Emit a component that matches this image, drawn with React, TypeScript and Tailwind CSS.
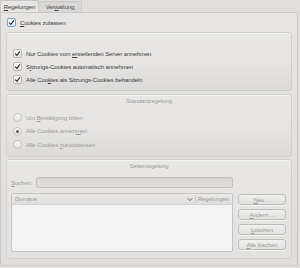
import React from 'react';

const U = ({ children }: { children: React.ReactNode }) => (
  <span className="underline underline-offset-1">{children}</span>
);

function Check({ focus = false }: { focus?: boolean }) {
  return (
    <span
      className={`flex items-center justify-center w-[9px] h-[9px] rounded-[2px] border bg-gradient-to-b from-[#fbfbfb] to-[#e6e5e3] ${
        focus ? 'border-[#6ea6db]' : 'border-[#b9b8b6]'
      }`}
    >
      <svg width="7" height="7" viewBox="0 0 7 7">
        <path d="M1.2 3.6 L2.9 5.3 L5.9 1.4" fill="none" stroke="#2e2e2e" strokeWidth="1.1" />
      </svg>
    </span>
  );
}

function Radio({ on = false }: { on?: boolean }) {
  return (
    <span className="flex items-center justify-center w-[9px] h-[9px] rounded-full border border-[#c4c3c1] bg-gradient-to-b from-[#f7f7f6] to-[#e2e1df]">
      {on && <span className="w-[3px] h-[3px] rounded-full bg-[#5a5a5a]" />}
    </span>
  );
}

function Btn({ children }: { children: React.ReactNode }) {
  return (
    <div className="h-[11px] w-[48px] flex items-center justify-center rounded-[3px] border border-[#bebdbb] bg-gradient-to-b from-[#f0f0ef] to-[#e1e0de] text-[#9b9a98] shadow-[0_1px_0_#f4f4f3]">
      {children}
    </div>
  );
}

export default function App() {
  return (
    <div
      className="w-[300px] h-[268px] bg-[#dfdedc] text-[6px] tracking-[-0.1px] leading-none text-[#3a3a3a] overflow-hidden"
      style={{ fontFamily: '"Liberation Sans", Arial, sans-serif' }}
    >
      {/* Tabs */}
      <div className="flex h-[12px] items-end">
        <div className="h-[12px] w-[39px] flex items-center justify-center bg-[#e6e5e3] border border-b-0 border-[#c9c8c6] rounded-t-[2px]">
          <span><U>R</U>egelungen</span>
        </div>
        <div className="h-[11px] w-[43px] flex items-center justify-center bg-[#d8d7d5] border border-l-0 border-b-0 border-[#c9c8c6] rounded-tr-[2px] text-[#4a4a4a]">
          <span>Ver<U>w</U>altung</span>
        </div>
      </div>

      {/* Panel */}
      <div className="w-[298px] h-[254px] border border-[#c9c8c6] bg-gradient-to-b from-[#e6e5e3] to-[#dfdedc] px-[5px] flex flex-col">
        <div className="flex items-center gap-[4px] h-[9px] mt-[5px] ml-[1px]">
          <Check focus />
          <span><U>C</U>ookies zulassen</span>
        </div>

        {/* Box 1 */}
        <div className="mt-[5px] h-[59px] rounded-[3px] border border-[#d0cfcd] bg-gradient-to-b from-[#e8e7e5] via-[#e6e5e3] to-[#dcdbd9] shadow-[inset_0_1px_0_#f3f3f2] flex flex-col gap-[4px] pl-[6px] pt-[16px]">
          <div className="flex items-center gap-[4px] h-[9px]">
            <Check />
            <span>Nur Cookies vom <U>er</U>stellenden Server annehmen</span>
          </div>
          <div className="flex items-center gap-[4px] h-[9px]">
            <Check />
            <span>S<U>i</U>tzungs-Cookies automatisch annehmen</span>
          </div>
          <div className="flex items-center gap-[4px] h-[9px]">
            <Check />
            <span>Alle Coo<U>k</U>ies als Sitzungs-Cookies behandeln</span>
          </div>
        </div>

        {/* Box 2 */}
        <div className="mt-[3px] h-[63px] rounded-[3px] border border-[#d0cfcd] bg-gradient-to-b from-[#e8e7e5] via-[#e6e5e3] to-[#dcdbd9] shadow-[inset_0_1px_0_#f3f3f2] flex flex-col text-[#9c9b99]">
          <div className="text-center mt-[3px] h-[8px]">Standardregelung</div>
          <div className="flex flex-col gap-[4.5px] pl-[6px] mt-[7px]">
            <div className="flex items-center gap-[4px] h-[9px]">
              <Radio />
              <span>Um <U>B</U>estätigung bitten</span>
            </div>
            <div className="flex items-center gap-[4px] h-[9px]">
              <Radio on />
              <span>Alle Cookies anneh<U>m</U>en</span>
            </div>
            <div className="flex items-center gap-[4px] h-[9px]">
              <Radio />
              <span>Alle Cookies <U>z</U>urückweisen</span>
            </div>
          </div>
        </div>

        {/* Box 3 */}
        <div className="mt-[2px] h-[100px] rounded-[3px] border border-[#d0cfcd] bg-gradient-to-b from-[#e8e7e5] to-[#e2e1df] shadow-[inset_0_1px_0_#f3f3f2] flex flex-col text-[#9c9b99]">
          <div className="text-center mt-[3px] h-[8px]">Seitenregelung</div>
          <div className="flex items-center mt-[6px] pl-[4px] h-[11px]">
            <span className="w-[25px]"><U>S</U>uchen:</span>
            <div className="w-[197px] h-[11px] rounded-[2px] border border-[#c4c3c1] bg-[#dddcda] shadow-[inset_0_1px_1px_#cfcecc]" />
          </div>
          <div className="flex mt-[5px] pl-[4px] gap-[5px]">
            <div className="w-[222px] h-[59px] border border-[#c4c3c1] rounded-[2px] bg-[#f3f3f3] flex flex-col">
              <div className="h-[11px] flex items-center bg-gradient-to-b from-[#e9e8e6] to-[#dfdedc] border-b border-[#d3d2d0] px-[3px]">
                <span className="flex-1">Domäne</span>
                <svg width="6" height="5" viewBox="0 0 6 5" className="mr-[2px]">
                  <path d="M0.8 1.2 L3 3.6 L5.2 1.2" fill="none" stroke="#6a6a6a" strokeWidth="1" />
                </svg>
                <span className="h-[8px] border-l border-[#c8c7c5] mr-[2px]" />
                <span>Regelungen</span>
              </div>
            </div>
            <div className="flex flex-col gap-[4px] pt-[1px]">
              <Btn><span><U>N</U>eu ...</span></Btn>
              <Btn><span><U>Ä</U>ndern ...</span></Btn>
              <Btn><span><U>L</U>öschen</span></Btn>
              <Btn><span><U>A</U>lle löschen</span></Btn>
            </div>
          </div>
        </div>
      </div>
    </div>
  );
}
